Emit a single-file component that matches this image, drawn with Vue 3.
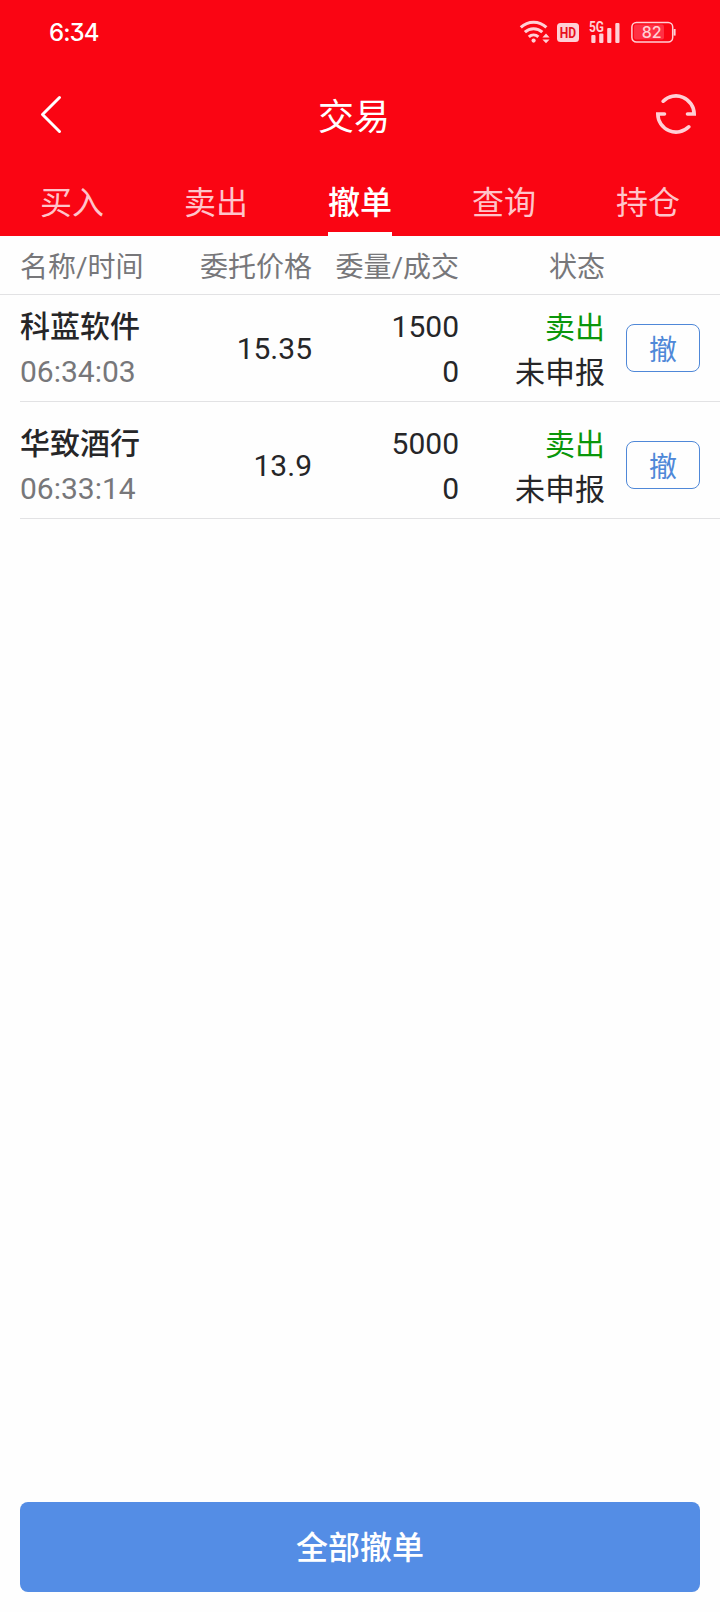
<script setup>
import { ref } from "vue";

const tabs = ["买入", "卖出", "撤单", "查询", "持仓"];
const activeTab = ref("撤单");

const orders = ref([
  {
    id: 1,
    name: "科蓝软件",
    time: "06:34:03",
    price: "15.35",
    amount: 1500,
    filled: 0,
    side: "卖出",
    status: "未申报",
  },
  {
    id: 2,
    name: "华致酒行",
    time: "06:33:14",
    price: "13.9",
    amount: 5000,
    filled: 0,
    side: "卖出",
    status: "未申报",
  },
]);

const cancelOrder = (id) => {
  orders.value = orders.value.filter((order) => order.id !== id);
};

const cancelAll = () => {
  orders.value = [];
};
</script>

<template>
  <div class="page">
    <header class="header">
      <div class="status-bar">
        <span class="clock">6:34</span>
        <div class="status-icons">
          <svg class="icon-wifi" width="32" height="24" viewBox="0 0 32 24">
            <g fill="none" stroke="currentColor" stroke-width="3">
              <path d="M0.8 7.4C8 0.5 19.2 0.5 26.4 7.4" />
              <path d="M4.9 12.2C9.8 7.6 17.4 7.6 22.3 12.2" />
              <path d="M8.8 16.8C11.6 14.3 15.6 14.3 18.4 16.8" />
            </g>
            <circle cx="13.6" cy="20.6" r="2.1" fill="currentColor" />
            <path
              d="M26 13.6L29.6 17.6H22.4zM26 23.2L22.4 19.4H29.6z"
              fill="currentColor"
            />
          </svg>
          <svg class="icon-hd" width="22" height="19" viewBox="0 0 22 19">
            <rect width="22" height="19" rx="3.5" fill="currentColor" />
            <text
              class="hd-text"
              x="2.8"
              y="14.8"
              textLength="16.4"
              lengthAdjust="spacingAndGlyphs"
            >
              HD
            </text>
          </svg>
          <svg class="icon-signal" width="32" height="26" viewBox="0 -2 32 26">
            <text
              class="signal-text"
              x="0"
              y="10.6"
              textLength="15"
              lengthAdjust="spacingAndGlyphs"
            >
              5G
            </text>
            <g fill="currentColor">
              <rect x="2.3" y="14" width="4.2" height="8" rx="1" />
              <rect x="10.2" y="12.5" width="4.2" height="9.5" rx="1" />
              <rect x="18.2" y="7" width="4.2" height="15" rx="1" />
              <rect x="26.3" y="2" width="4.2" height="20" rx="1" />
            </g>
          </svg>
          <svg class="icon-battery" width="46" height="24" viewBox="0 0 46 24">
            <rect x="3" y="4.5" width="30" height="15" rx="2" fill="#ff3044" />
            <rect
              x="0.9"
              y="2.4"
              width="40.8"
              height="19.6"
              rx="4.5"
              fill="none"
              stroke="currentColor"
              stroke-width="1.5"
            />
            <path d="M43.6 9V15.6" stroke="currentColor" stroke-width="2" />
            <text class="battery-text" x="20.6" y="17.9">82</text>
          </svg>
        </div>
      </div>

      <div class="nav-bar">
        <svg class="icon-back" width="40" height="40" viewBox="0 0 40 40">
          <path
            d="M28.5 3.5L11.5 20.5L28.5 37.5"
            fill="none"
            stroke="currentColor"
            stroke-width="3"
            stroke-linecap="round"
            stroke-linejoin="round"
          />
        </svg>
        <h1 class="title">交易</h1>
        <svg class="icon-refresh" width="40" height="40" viewBox="0 0 40 40">
          <g
            fill="none"
            stroke="currentColor"
            stroke-width="3.6"
            stroke-linecap="round"
          >
            <path d="M7.2 7.2A18.2 18.2 0 0 1 38.2 20H31.5" />
            <path d="M32.8 32.8A18.2 18.2 0 0 1 1.8 20H8.5" />
          </g>
        </svg>
      </div>

      <nav class="tabs">
        <div
          v-for="tab in tabs"
          :key="tab"
          class="tab"
          :class="{ active: tab === activeTab }"
          @click="activeTab = tab"
        >
          <span class="tab-label">{{ tab }}</span>
        </div>
      </nav>
    </header>

    <div class="columns table-head">
      <span>名称/时间</span>
      <span>委托价格</span>
      <span>委量/成交</span>
      <span>状态</span>
    </div>

    <main class="orders">
      <div v-for="order in orders" :key="order.id" class="columns order">
        <div class="cell stacked">
          <p class="name">{{ order.name }}</p>
          <p class="time">{{ order.time }}</p>
        </div>
        <div class="cell">
          <p>{{ order.price }}</p>
        </div>
        <div class="cell stacked">
          <p>{{ order.amount }}</p>
          <p>{{ order.filled }}</p>
        </div>
        <div class="cell stacked status">
          <p class="side">{{ order.side }}</p>
          <p>{{ order.status }}</p>
        </div>
        <button class="cancel" @click="cancelOrder(order.id)">撤</button>
      </div>
    </main>

    <footer class="footer">
      <button class="cancel-all" @click="cancelAll">全部撤单</button>
    </footer>
  </div>
</template>

<style>
body {
  margin: 0;
  background: #fefefe;
}
</style>

<style scoped>
.page {
  display: flex;
  flex-direction: column;
  width: 720px;
  height: 1612px;
  background: #fefefe;
  color: #262628;
  font-family: Roboto, "Noto Sans CJK SC", sans-serif;
}

p,
h1 {
  margin: 0;
}

button {
  padding: 0;
  font-family: inherit;
}

.header {
  display: flex;
  flex-direction: column;
  height: 236px;
  background: #fa0513;
  color: white;
}

.status-bar {
  display: flex;
  align-items: center;
  justify-content: space-between;
  height: 64px;
  padding: 0 43px 0 49px;
  box-sizing: border-box;
}

.clock {
  padding-top: 1px;
  font-family: Inter, sans-serif;
  font-size: 24px;
  font-weight: 500;
  font-feature-settings: "cv09";
  letter-spacing: -0.9px;
}

.status-icons {
  display: flex;
  align-items: center;
  color: #ffd0d6;
}

.icon-wifi {
  overflow: visible;
}

.icon-hd {
  margin: 1px 10px 0 5px;
}

.hd-text {
  fill: #e8101e;
  font-size: 15px;
  font-weight: 700;
}

.icon-signal {
  margin-right: 10px;
}

.signal-text {
  fill: currentColor;
  font-size: 14.5px;
  font-weight: 700;
}

.battery-text {
  fill: currentColor;
  font-family: Inter, sans-serif;
  font-size: 16px;
  font-weight: 500;
  text-anchor: middle;
}

.nav-bar {
  display: flex;
  align-items: center;
  justify-content: space-between;
  height: 100px;
  padding: 0 24px 0 31px;
}

.title {
  padding: 7px 19px 0 0;
  font-size: 36px;
  font-weight: 400;
  line-height: 44px;
}

.icon-refresh {
  color: #ffd0d6;
}

.tabs {
  display: grid;
  grid-template-columns: repeat(5, 1fr);
  height: 72px;
}

.tab {
  display: flex;
  justify-content: center;
  color: #ffc4ca;
  font-size: 32px;
  line-height: 78px;
}

.tab-label {
  height: 68px;
  border-bottom: 4px solid transparent;
}

.tab.active {
  color: white;
  font-weight: 500;
}

.tab.active .tab-label {
  border-color: white;
}

.columns {
  display: grid;
  grid-template-columns: 145px 147px 147px 146px 74px;
  text-align: right;
}

.columns > :first-child {
  text-align: left;
}

.table-head {
  height: 58px;
  padding: 0 20px;
  border-bottom: 1px solid #e2e2e4;
  color: #77777a;
  font-size: 28px;
  line-height: 64px;
}

.order {
  align-items: center;
  height: 106px;
  margin-left: 20px;
  border-bottom: 1px solid #e2e2e4;
  font-size: 30px;
  line-height: 45px;
}

.order + .order {
  padding-top: 10px;
}

.stacked {
  padding-top: 2px;
}

.status {
  padding-top: 4px;
}

.name {
  height: 45px;
  font-weight: 500;
  line-height: 46px;
}

.time {
  color: #77777a;
}

.side {
  color: #0a960a;
}

.cancel {
  width: 74px;
  height: 48px;
  margin-left: 21px;
  padding-top: 6px;
  border: 1px solid #4f88d8;
  border-radius: 8px;
  background: transparent;
  color: #4f88d8;
  font-size: 28px;
  line-height: 40px;
}

.footer {
  margin-top: auto;
  padding: 0 20px 20px;
}

.cancel-all {
  display: block;
  width: 100%;
  height: 90px;
  padding-bottom: 4px;
  border: none;
  border-radius: 8px;
  background: #548de5;
  color: white;
  font-size: 32px;
  font-weight: 500;
}
</style>
